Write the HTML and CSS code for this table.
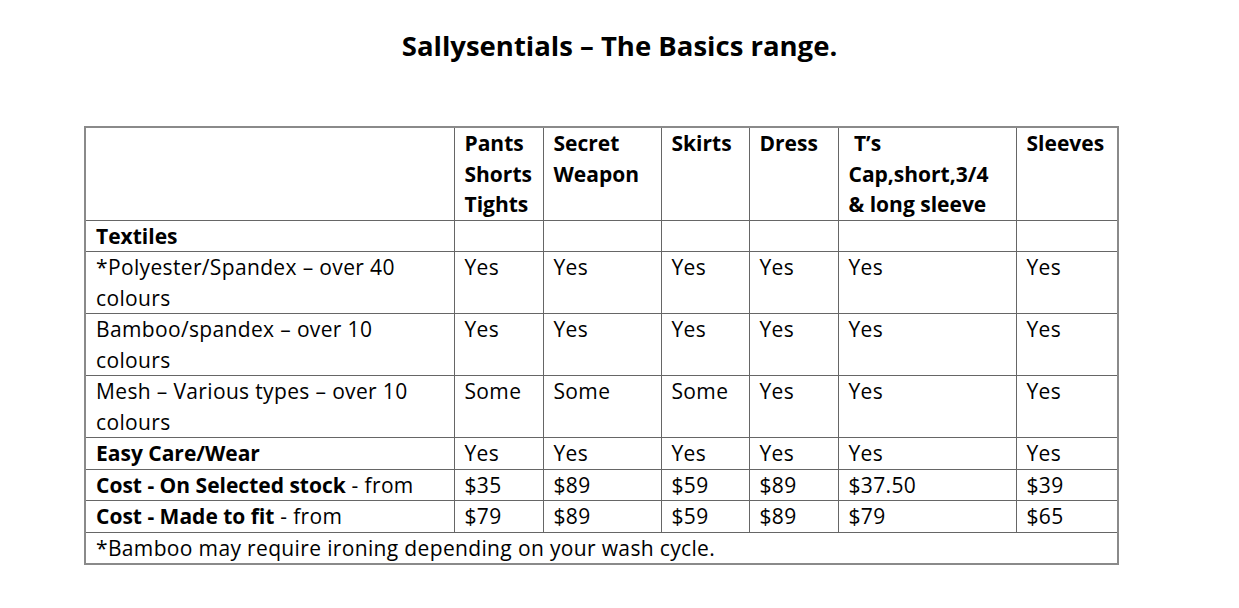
FILE: index.html
```html
<!DOCTYPE html>
<html>
<head>
<meta charset="utf-8">
<link rel="stylesheet" href="styles.css">
</head>
<body>
<div class="page">
  <h1 class="title">Sallysentials – The Basics range.</h1>
  <table class="range">
    <colgroup>
      <col class="c0"><col class="c1"><col class="c2"><col class="c3"><col class="c4"><col class="c5"><col class="c6">
    </colgroup>
    <tr class="head">
      <td></td>
      <td><b>Pants<br>Shorts<br>Tights</b></td>
      <td><b>Secret<br>Weapon</b></td>
      <td><b>Skirts</b></td>
      <td><b>Dress</b></td>
      <td><b>&nbsp;T’s<br>Cap,short,3/4<br>&amp; long sleeve</b></td>
      <td><b>Sleeves</b></td>
    </tr>
    <tr><td><b>Textiles</b></td><td></td><td></td><td></td><td></td><td></td><td></td></tr>
    <tr><td>*Polyester/Spandex – over 40<br>colours</td><td>Yes</td><td>Yes</td><td>Yes</td><td>Yes</td><td>Yes</td><td>Yes</td></tr>
    <tr><td>Bamboo/spandex – over 10<br>colours</td><td>Yes</td><td>Yes</td><td>Yes</td><td>Yes</td><td>Yes</td><td>Yes</td></tr>
    <tr><td>Mesh – Various types – over 10<br>colours</td><td>Some</td><td>Some</td><td>Some</td><td>Yes</td><td>Yes</td><td>Yes</td></tr>
    <tr><td><b>Easy Care/Wear</b></td><td>Yes</td><td>Yes</td><td>Yes</td><td>Yes</td><td>Yes</td><td>Yes</td></tr>
    <tr><td><b>Cost - On Selected stock</b> - from</td><td>$35</td><td>$89</td><td>$59</td><td>$89</td><td>$37.50</td><td>$39</td></tr>
    <tr><td><b>Cost - Made to fit</b> - from</td><td>$79</td><td>$89</td><td>$59</td><td>$89</td><td>$79</td><td>$65</td></tr>
    <tr><td colspan="7">*Bamboo may require ironing depending on your wash cycle.</td></tr>
  </table>
</div>
</body>
</html>
```
FILE: styles.css
```css
html, body {
  margin: 0;
  background: #fff;
}
.page {
  width: 1239px;
  padding-top: 27px;
  font-family: "Open Sans", "Lato", sans-serif;
  color: #000;
}
.title {
  margin: 0;
  text-align: center;
  font-size: 27.5px;
  font-weight: 700;
  line-height: 38px;
}
.range {
  margin: 61px 0 0 84px;
  border-collapse: collapse;
  table-layout: fixed;
  width: 1034px;
  border: 2px solid #8a8a8a;
  font-size: 21px;
  line-height: 30.5px;
  letter-spacing: 0.35px;
}
.range b {
  letter-spacing: 0;
}
.range td {
  border: 1px solid #666;
  padding: 0 2px 0 10px;
  vertical-align: top;
  white-space: nowrap;
}
.c0 { width: 369px; }
.c1 { width: 89px; }
.c2 { width: 118px; }
.c3 { width: 88px; }
.c4 { width: 89px; }
.c5 { width: 178px; }
.c6 { width: 102px; }
```
